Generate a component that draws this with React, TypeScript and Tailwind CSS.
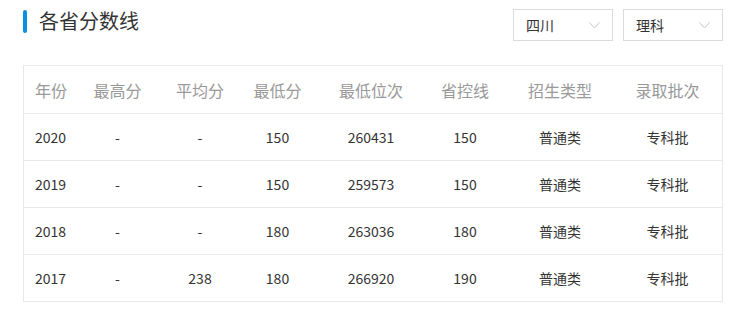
const rows = [
  ["2020", "-", "-", "150", "260431", "150", "普通类", "专科批"],
  ["2019", "-", "-", "150", "259573", "150", "普通类", "专科批"],
  ["2018", "-", "-", "180", "263036", "180", "普通类", "专科批"],
  ["2017", "-", "238", "180", "266920", "190", "普通类", "专科批"],
];

const heads = ["年份", "最高分", "平均分", "最低分", "最低位次", "省控线", "招生类型", "录取批次"];

const cols = "grid grid-cols-[48px_91px_74px_81px_106px_82px_108px_107px]";

function Select({ label }: { label: string }) {
  return (
    <div className="flex h-8 w-[100px] items-center justify-between border border-[#dcdcdc] pl-3 pr-3 text-[14px] text-[#333]">
      <span>{label}</span>
      <svg width="11" height="7" viewBox="0 0 11 7" fill="none">
        <path d="M0.5 0.5 L5.5 6 L10.5 0.5" stroke="#c4c4c4" strokeWidth="1" />
      </svg>
    </div>
  );
}

export default function App() {
  return (
    <div className="h-[314px] w-[751px] bg-white font-['Noto_Sans_CJK_SC','Noto_Sans',sans-serif]">
      <div className="flex items-start justify-between pl-[23px] pr-[28px] pt-[9px]">
        <div className="flex items-center gap-3">
          <div className="h-[23px] w-1 rounded-sm bg-[#0b8fe0]" />
          <h2 className="text-[20px] leading-[24px] text-[#333]">各省分数线</h2>
        </div>
        <div className="flex gap-[10px]">
          <Select label="四川" />
          <Select label="理科" />
        </div>
      </div>

      <div className="mx-[23px] mt-[24px] w-[700px] border border-[#e8e8e8]">
        <div className={`${cols} h-[47px] items-center text-[16px] text-[#999]`}>
          {heads.map((h, i) => (
            <div key={h} className={i === 0 ? "pl-[11px]" : "text-center"}>
              {h}
            </div>
          ))}
        </div>
        {rows.map((r) => (
          <div
            key={r[0]}
            className={`${cols} h-[47px] items-center border-t border-[#e8e8e8] text-[14px] text-[#333]`}
          >
            {r.map((c, i) => (
              <div key={i} className={i === 0 ? "pl-[11px]" : "text-center"}>
                {c}
              </div>
            ))}
          </div>
        ))}
      </div>
    </div>
  );
}
